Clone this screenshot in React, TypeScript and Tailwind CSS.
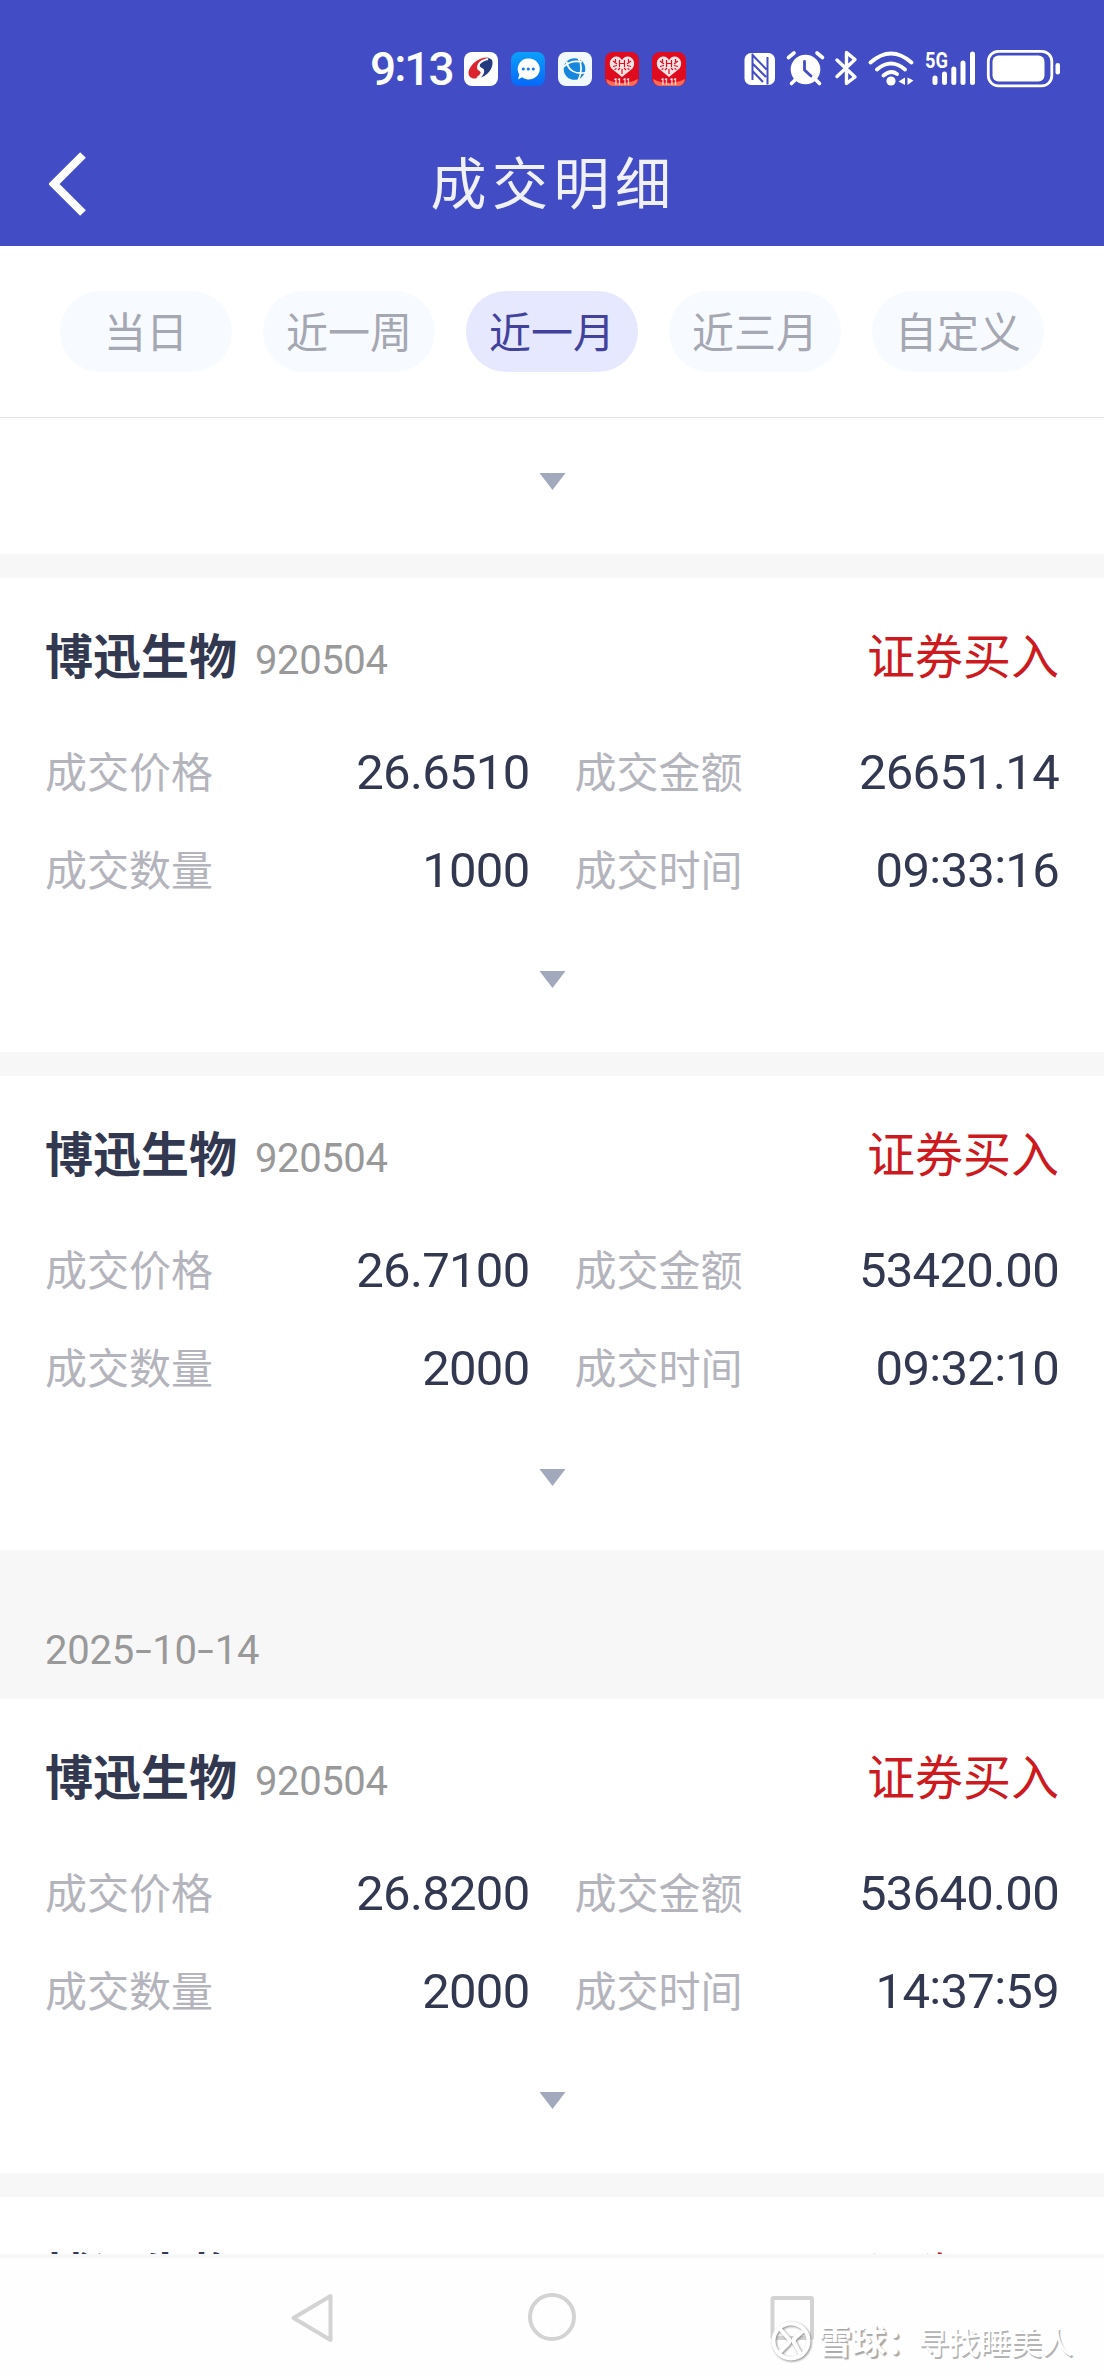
import React, { useState } from 'react'
import clsx from 'clsx'

type Trade = {
    name: string
    code: string
    action: string
    price: string
    amount: string
    quantity: string
    time: string
}

const TABS = ['当日', '近一周', '近一月', '近三月', '自定义']

const TRADES: Trade[] = [
    { name: '博迅生物', code: '920504', action: '证券买入', price: '26.6510', amount: '26651.14', quantity: '1000', time: '09:33:16' },
    { name: '博迅生物', code: '920504', action: '证券买入', price: '26.7100', amount: '53420.00', quantity: '2000', time: '09:32:10' },
]

const OLDER_TRADE: Trade = {
    name: '博迅生物', code: '920504', action: '证券买入', price: '26.8200', amount: '53640.00', quantity: '2000', time: '14:37:59',
}

function AppIcons() {
    return (
        <div className="flex gap-[13px]">
            <svg className="w-[34px] h-[34px]" viewBox="0 0 34 34">
                <rect width="34" height="34" rx="8" fill="#fff" />
                <path d="M28 8C30 13 26.500 22 17 25.500C20 22 22 18 18 16C14 14 15 10 19 8C22 6 26 5.500 28 8Z" fill="#243a80" />
                <path d="M25 5.500C15 4.500 6 12 4.500 20C4 26 10 28 15 25.500C18 24 18 20 14 18C11 15 15 9 25 5.500Z" fill="#dc2430" />
                <path d="M24 7C15 9 12.500 14 16 17C19.500 19 18 23 13 26" fill="none" stroke="#fff" strokeWidth="1.800" />
            </svg>
            <svg className="w-[34px] h-[34px]" viewBox="0 0 34 34">
                <defs>
                    <linearGradient id="chat" x1="0" y1="0" x2="0" y2="1">
                        <stop offset="0" stopColor="#0ba0fb" />
                        <stop offset="1" stopColor="#0768f8" />
                    </linearGradient>
                </defs>
                <rect width="34" height="34" rx="8" fill="url(#chat)" />
                <path d="M17.500 6.500a11 10.500 0 1 1-6.500 18.800L7 27.500l1.300-5A10.500 10.500 0 0 1 17.500 6.500Z" fill="#fff" />
                <circle cx="12.300" cy="17" r="1.600" fill="#1778e8" />
                <circle cx="17.300" cy="17" r="1.600" fill="#1778e8" />
                <circle cx="22.300" cy="17" r="1.600" fill="#1778e8" />
            </svg>
            <svg className="w-[34px] h-[34px]" viewBox="0 0 34 34">
                <rect width="34" height="34" rx="8" fill="#f2f8ff" />
                <circle cx="16.500" cy="17" r="10.800" fill="#1687dc" />
                <path d="M5.500 15C11 9.500 18 8.500 24 10M20 5C24 12 24 20 20.500 28M8.500 9.500C10 18 17 23 28 20.500" fill="none" stroke="#fff" strokeWidth="1.700" />
            </svg>
            <SaleIcon />
            <SaleIcon />
        </div>
    )
}

function SaleIcon() {
    return (
        <svg className="w-[34px] h-[34px]" viewBox="0 0 34 34">
            <rect width="34" height="34" rx="8" fill="#df0c1f" />
            <path d="M1 27Q17 35 33 27Q32 34 26 34H8Q2 34 1 27Z" fill="#fb6a55" />
            <path d="M17 25L6.500 16.500C2.500 11 6 4 12 4.500C15 5 16 6.500 17 8C18 6.500 19 5 22 4.500C28 4 31.500 11 27.500 16.500Z" fill="#fbe4e4" />
            <path d="M14.500 8v7M19.500 8v7M14.500 11.500h5M8 9l4 3M26 9l-4 3M8 14.500l4-1M26 14.500l-4-1M13 18l2-2M21 18l-2-2M17 17v5M10.500 7v3M23.500 7v3M9.500 17.500l2-1M24.500 17.500l-2-1" stroke="#df0c1f" strokeWidth="1.200" fill="none" />
            <text x="17" y="33" textAnchor="middle" fontSize="9" fontWeight="700" fontFamily="Roboto" textLength="16" lengthAdjust="spacingAndGlyphs" fill="#fff">11.11</text>
        </svg>
    )
}

function StatusIcons() {
    return (
        <svg className="w-[320px] h-10" viewBox="742 48 320 40" fill="none">
            {/* NFC */}
            <rect x="744.500" y="52" width="30.500" height="32" rx="6.500" fill="#fff" />
            <path d="M752.500 52.500V79M753 54.500L766.500 68.500M752.500 62.500L766 76M752.500 70L763 81M767.500 56V83.500" stroke="#424cc4" strokeWidth="2" />

            {/* Alarm */}
            <circle cx="805.500" cy="68.500" r="14.800" fill="#fff" />
            <path d="M788.500 56.500L794 52M822.500 56.500L817 52M795 79L791.500 82.500M816 79L819.500 82.500" stroke="#fff" strokeWidth="3.600" strokeLinecap="round" />
            <path d="M804.500 60.500V69L811 75" stroke="#424cc4" strokeWidth="2.800" strokeLinecap="round" strokeLinejoin="round" />

            {/* Bluetooth */}
            <path d="M837 59L855 76L846.500 82.500V51.500L855 58.500L837 75.500" stroke="#fff" strokeWidth="3.400" strokeLinecap="round" strokeLinejoin="round" />

            {/* Wi-Fi */}
            <path d="M870.500 61.500Q891 43.500 911.500 61.500M877 68.500Q891 56.500 905 68.500M883.500 74.500Q891 68.500 897 73" stroke="#fff" strokeWidth="3.800" strokeLinecap="round" />
            <circle cx="891" cy="80" r="4.600" fill="#fff" />
            <path d="M905 76.500V84L898.500 80.500ZM907.500 76.500V84L913.500 79.500Z" fill="#fff" />

            {/* Mobile signal */}
            <text x="925" y="67" fontSize="22" fontWeight="700" fontFamily="Roboto" textLength="23" lengthAdjust="spacingAndGlyphs" fill="#fff">5G</text>
            <path d="M935 77V81.500M944.500 73V81.500M953.800 68V81.500M963 62V81.500M972.500 53V81.500" stroke="#fff" strokeWidth="5" strokeLinecap="round" />

            {/* Battery */}
            <rect x="988.300" y="50.300" width="63.500" height="34.500" rx="10" stroke="#fff" strokeWidth="2.800" />
            <rect x="992.500" y="54.500" width="52" height="26" rx="6" fill="#fff" />
            <rect x="1055.500" y="62" width="4.500" height="11.500" rx="2.200" fill="#fff" />
        </svg>
    )
}

// Colons sit on the middle of the digits, dashes get a bit more air
function Num({ value }: { value: string }) {
    return (
        <>
            {value.split(/([:-])/).map((part, i) => {
                if (part === ':') return <span key={i} className="relative -top-[4px]">:</span>
                if (part === '-') return <span key={i} className="inline-block w-[18px] text-center"><span className="inline-block scale-x-150">-</span></span>
                return part
            })}
        </>
    )
}

function Field({ label, value }: { label: string; value: string }) {
    return (
        <div className="flex-1 flex items-center justify-between">
            <span className="text-[42px] leading-none pb-[4px] text-[#b4b4bc]">{label}</span>
            <span className="font-[Roboto] text-[49px] leading-none tracking-[-0.7px] text-[#323850]">
                <Num value={value} />
            </span>
        </div>
    )
}

function Expand() {
    return (
        <button type="button" className="block mx-auto">
            <svg className="w-[27px] h-[17px]" viewBox="0 0 26 17">
                <path d="M0 0H26L13 17Z" fill="#a2a9bc" />
            </svg>
        </button>
    )
}

function TradeHead({ trade }: { trade: Trade }) {
    return (
        <div className="h-16 flex items-center justify-between">
            <div className="flex items-center">
                <span className="text-[48px] leading-none pb-[6px] font-bold text-[#323850]">{trade.name}</span>
                <span className="font-[Roboto] text-[40px] leading-none tracking-[-0.4px] text-[#999999] ml-[18px] pt-[9px]">{trade.code}</span>
            </div>
            <span className="text-[48px] leading-none pb-[6px] text-[#cc1a1f]">{trade.action}</span>
        </div>
    )
}

function TradeCard({ trade }: { trade: Trade }) {
    return (
        <section className="h-[474px] shrink-0 bg-white px-[45px] pt-[46px]">
            <TradeHead trade={trade} />
            <div className="mt-[35px]">
                <div className="h-[98px] flex gap-[45px]">
                    <Field label="成交价格" value={trade.price} />
                    <Field label="成交金额" value={trade.amount} />
                </div>
                <div className="h-[98px] flex gap-[45px]">
                    <Field label="成交数量" value={trade.quantity} />
                    <Field label="成交时间" value={trade.time} />
                </div>
            </div>
            <div className="mt-[52px]">
                <Expand />
            </div>
        </section>
    )
}

export default function App() {
    const [tab, setTab] = useState('近一月')

    return (
        <div className="w-[1104px] h-[2376px] relative flex flex-col overflow-hidden bg-white font-['Noto_Sans_CJK_SC',sans-serif]">
            {/* Header */}
            <header className="h-[246px] shrink-0 bg-[#424cc4] text-white">
                <div className="h-[137px] flex items-center pl-[370px] pr-[42px]">
                    <span className="w-[94px] font-[Roboto] text-[46px] leading-none font-medium tracking-[-2px]">
                        9<span className="relative -top-[4px]">:</span>13
                    </span>
                    <AppIcons />
                    <div className="ml-auto h-10">
                        <StatusIcons />
                    </div>
                </div>
                <div className="h-[93px] grid grid-cols-3 items-center px-[49px]">
                    <svg className="w-[38px] h-[64px]" viewBox="0 0 38 64">
                        <path d="M34 3L5 32L34 61" fill="none" stroke="#fff" strokeWidth="8" />
                    </svg>
                    <h1 className="pl-[3px] pb-[7px] text-center text-[56px] leading-none tracking-[5.5px] whitespace-nowrap text-[#f0f0fb]">成交明细</h1>
                </div>
            </header>

            {/* Period tabs */}
            <nav className="h-[172px] shrink-0 flex gap-[31px] px-[60px] pt-[45px] border-b border-[#e4e4e6]">
                {TABS.map((t) => (
                    <button
                        key={t}
                        type="button"
                        onClick={() => setTab(t)}
                        className={clsx(
                            'w-[172px] h-[81px] pb-[4px] rounded-full text-[42px] leading-none',
                            t === tab ? 'bg-[#e5e8fe] text-[#42429c]' : 'bg-[#f7fafe] text-[#a5a7b2]'
                        )}
                    >
                        {t}
                    </button>
                ))}
            </nav>

            {/* Trades */}
            <main className="h-[1836px] shrink-0 overflow-hidden flex flex-col bg-[#f7f7f7]">
                <div className="h-[136px] shrink-0 bg-white pt-[55px]">
                    <Expand />
                </div>
                <div className="shrink-0 flex flex-col gap-6 pt-6">
                    {TRADES.map((trade) => (
                        <TradeCard key={trade.time} trade={trade} />
                    ))}
                </div>
                <div className="h-[149px] shrink-0 px-[45px] pt-[81px]">
                    <span className="font-[Roboto] text-[40px] leading-none tracking-[-0.2px] text-[#999999]">
                        <Num value="2025-10-14" />
                    </span>
                </div>
                <TradeCard trade={OLDER_TRADE} />
                <div className="mt-6 h-[474px] shrink-0 bg-white px-[45px] pt-[46px]">
                    <TradeHead trade={OLDER_TRADE} />
                </div>
            </main>

            {/* System navigation */}
            <footer className="flex-1 border-t-4 border-[#f7f7f8] bg-[#fefefe] flex justify-center pt-[34px]">
                <svg className="w-[540px] h-[52px]" viewBox="282 2292 540 52" fill="none" stroke="#d3d3d3" strokeWidth="4">
                    <path d="M330.500 2296V2340L293.500 2318Z" strokeLinejoin="round" />
                    <circle cx="552" cy="2317" r="22" />
                    <rect x="772.500" y="2298" width="39.500" height="40" rx="1" />
                </svg>
            </footer>

            {/* Watermark */}
            <div className="absolute right-[31px] bottom-[12px] flex items-center text-white">
                <svg className="w-[44px] h-[44px] drop-shadow-[1.5px_1.5px_1px_#8a8a8a]" viewBox="0 0 44 44" fill="none" stroke="#fff" strokeWidth="4">
                    <circle cx="24" cy="21" r="17.500" />
                    <path d="M13 9L21 18Q24 21 21 24L13 32M36 11L28 18Q25 21 28 24L35 37" />
                </svg>
                <span className="w-[100px] text-[34px] leading-none font-bold ml-[7px] pb-[4px] whitespace-nowrap [text-shadow:2px_2px_1px_#a8a8a8]">雪球：</span>
                <span className="text-[31px] leading-none pb-[3px] [text-shadow:1.5px_1.5px_0px_#b4b4b4]">寻找睡美人</span>
            </div>
        </div>
    )
}
